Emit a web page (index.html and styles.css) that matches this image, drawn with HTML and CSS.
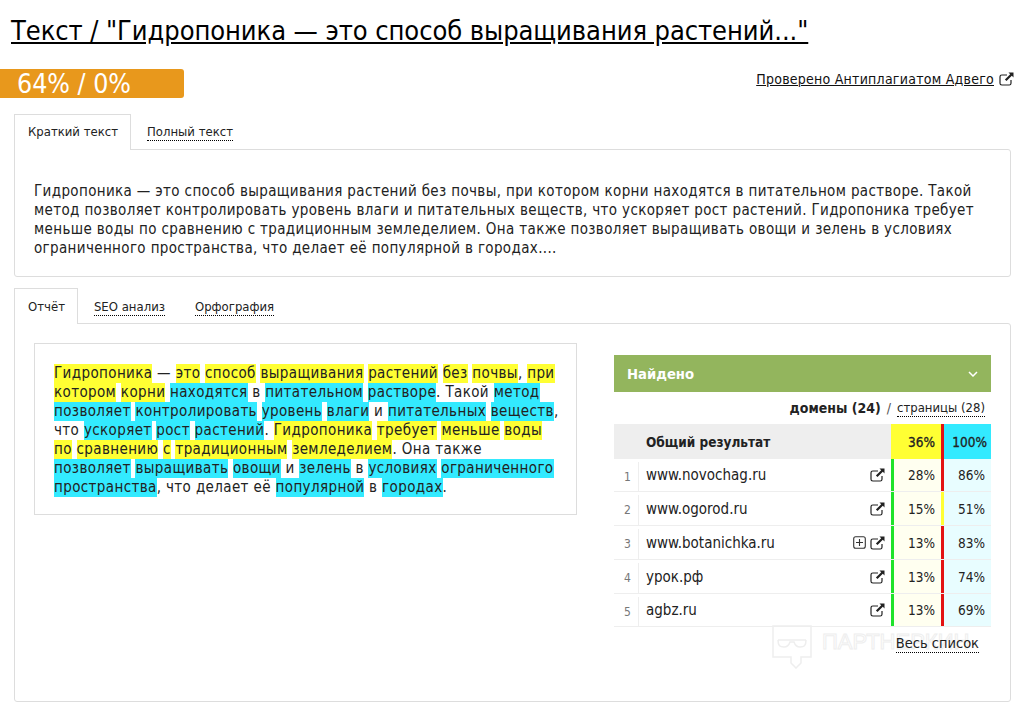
FILE: index.html
```html
<!DOCTYPE html>
<html lang="ru">
<head>
<meta charset="utf-8">
<title>Текст</title>
<link rel="stylesheet" href="styles.css">
</head>
<body>
<svg class="sprite" width="0" height="0">
  <symbol id="ext" viewBox="0 0 15 14">
    <path d="M12 8v3.2A1.8 1.8 0 0 1 10.2 13H2.800A1.800 1.800 0 0 1 1 11.200V4.800A1.800 1.800 0 0 1 2.800 3H8" fill="none" stroke="currentColor" stroke-width="1.200"/>
    <path d="M9.500 .5H14.500V5.500L12.800 3.800 7.500 9.100 5.900 7.500 11.200 2.200Z" fill="currentColor"/>
  </symbol>
</svg>
<h1 class="title"><a href="#">Текст / "Гидропоника — это способ выращивания растений..."</a></h1>
<div class="meta">
  <div class="score">64% / 0%</div>
  <a class="verified" href="#"><span class="verified-text">Проверено Антиплагиатом Адвего</span><svg class="ext ext-top"><use href="#ext"/></svg></a>
</div>
<div class="tabs tabs-first">
  <span class="tab active">Краткий текст</span>
  <span class="tab"><span class="dotted">Полный текст</span></span>
</div>
<section class="panel panel-text">
  <p class="summary">Гидропоника — это способ выращивания растений без почвы, при котором корни находятся в питательном растворе. Такой<br>метод позволяет контролировать уровень влаги и питательных веществ, что ускоряет рост растений. Гидропоника требует<br>меньше воды по сравнению с традиционным земледелием. Она также позволяет выращивать овощи и зелень в условиях<br>ограниченного пространства, что делает её популярной в городах....</p>
</section>
<div class="tabs tabs-second">
  <span class="tab active">Отчёт</span>
  <span class="tab"><span class="dotted">SEO анализ</span></span>
  <span class="tab"><span class="dotted">Орфография</span></span>
</div>
<section class="panel panel-report">
  <div class="marked">
    <p class="marked-text"><i class="y">Гидропоника</i> — <i class="y">это</i> <i class="y">способ</i> <i class="y">выращивания</i> <i class="y">растений</i> <i class="y">без</i> <i class="y">почвы</i>, <i class="y">при</i><br><i class="y">котором</i> <i class="y">корни</i> <i class="c">находятся</i> в <i class="c">питательном</i> <i class="c">растворе</i>. Такой <i class="c">метод</i><br><i class="c">позволяет</i> <i class="c">контролировать</i> <i class="c">уровень</i> <i class="c">влаги</i> и <i class="c">питательных</i> <i class="c">веществ</i>,<br>что <i class="c">ускоряет</i> <i class="c">рост</i> <i class="c">растений</i>. <i class="y">Гидропоника</i> <i class="y">требует</i> <i class="y">меньше</i> <i class="y">воды</i><br><i class="y">по</i> <i class="y">сравнению</i> <i class="y">с</i> <i class="y">традиционным</i> <i class="y">земледелием</i>. Она также<br><i class="c">позволяет</i> <i class="c">выращивать</i> <i class="c">овощи</i> и <i class="c">зелень</i> в <i class="c">условиях</i> <i class="c">ограниченного</i><br><i class="c">пространства</i>, что делает её <i class="c">популярной</i> в <i class="c">городах</i>.</p>
  </div>
  <div class="found">
    <div class="found-head"><span>Найдено</span>
      <svg class="chev" viewBox="0 0 10 6" width="10" height="6"><path d="M1 1l4 4 4-4" fill="none" stroke="currentColor" stroke-width="1.500"/></svg>
    </div>
    <div class="found-switch"><b>домены (24)</b><span class="slash">/</span><span class="dotted">страницы (28)</span></div>
    <div class="grid">
      <div class="row row-head">
        <div class="num"></div>
        <div class="name"><b>Общий результат</b></div>
        <div class="pct p1 head-y">36%</div>
        <div class="pct p2 head-c">100%</div>
      </div>
      <div class="row">
        <div class="num"><span>1</span></div>
        <div class="name"><span class="host">www.novochag.ru</span><svg class="ext"><use href="#ext"/></svg></div>
        <div class="pct p1 g">28%</div>
        <div class="pct p2 r">86%</div>
      </div>
      <div class="row">
        <div class="num"><span>2</span></div>
        <div class="name"><span class="host">www.ogorod.ru</span><svg class="ext"><use href="#ext"/></svg></div>
        <div class="pct p1 g">15%</div>
        <div class="pct p2 yl">51%</div>
      </div>
      <div class="row">
        <div class="num"><span>3</span></div>
        <div class="name"><span class="host">www.botanichka.ru</span>
          <svg class="plus" viewBox="0 0 13 13"><rect x=".7" y=".7" width="11.600" height="11.600" rx="2" fill="none" stroke="currentColor" stroke-width="1.100"/><path d="M6.500 3v7M3 6.500h7" stroke="currentColor" stroke-width="1.100"/></svg>
          <svg class="ext ext-near"><use href="#ext"/></svg></div>
        <div class="pct p1 g">13%</div>
        <div class="pct p2 r">83%</div>
      </div>
      <div class="row">
        <div class="num"><span>4</span></div>
        <div class="name"><span class="host">урок.рф</span><svg class="ext"><use href="#ext"/></svg></div>
        <div class="pct p1 g">13%</div>
        <div class="pct p2 r">74%</div>
      </div>
      <div class="row">
        <div class="num"><span>5</span></div>
        <div class="name"><span class="host">agbz.ru</span><svg class="ext"><use href="#ext"/></svg></div>
        <div class="pct p1 g">13%</div>
        <div class="pct p2 r">69%</div>
      </div>
    </div>
    <div class="all"><span class="dotted">Весь список</span></div>
    <div class="watermark">
      <svg viewBox="0 0 40 44" width="40" height="44"><path d="M1 1H39V32H29V38L24 43 19 38V32H1Z" fill="none" stroke="currentColor" stroke-width="1.500"/><path d="M6 15H34M6 15c0 6 2 7 6 7s5-2 6-5h4c1 3 2 5 6 5s6-1 6-7" fill="none" stroke="currentColor" stroke-width="1.500"/></svg>
      <span>ПАРТНЕРКИН</span>
    </div>
  </div>
</section>
</body>
</html>
```
FILE: styles.css
```css
* { box-sizing: border-box; }
html, body { margin: 0; padding: 0; background: #fff; }
body {
  font-family: "DejaVu Sans", sans-serif;
  font-stretch: condensed;
  font-size: 15px;
  color: #222;
  height: 719px;
  overflow: hidden;
}
.sprite { position: absolute; }
a { color: #000; }
.title {
  margin: 0;
  padding: 14px 11px 0;
  font-size: 27px;
  line-height: 33px;
  font-weight: 400;
  letter-spacing: -.07px;
}
.meta {
  display: flex;
  justify-content: space-between;
  align-items: center;
  margin-top: 22px;
  height: 29px;
  padding-right: 12px;
}
.score {
  width: 184px;
  height: 29px;
  padding-left: 17px;
  background: #e8981c;
  border-radius: 0 3px 3px 0;
  color: #fff;
  font-size: 26.500px;
  line-height: 29px;
}
.verified { display: flex; align-items: center; gap: 5px; font-size: 14px; letter-spacing: .25px; color: #111; text-decoration: none; margin-top: -10px; }
.verified-text { text-decoration: underline; }
.ext { width: 15px; height: 14px; color: #222; flex: none; }
.tabs {
  display: flex;
  margin: 0 15px 0 14px;
  height: 36px;
}
.tabs-first { margin-top: 16px; }
.tabs-second { margin-top: 11px; }
.tab {
  padding: 0 13px;
  margin-right: 2px;
  height: 36px;
  line-height: 33px;
  font-size: 13px;
  border: 1px solid transparent;
  border-bottom: 0;
}
.tabs-second .tab { line-height: 35px; }
.tab.active {
  background: #fff;
  border-color: #ddd;
  padding: 0 12px 0 13px;
  position: relative;
  z-index: 1;
}
.dotted { border-bottom: 1px dotted #000; padding-bottom: 1px; }
.panel {
  margin: -1px 15px 0 14px;
  border: 1px solid #ddd;
  border-radius: 0 3px 3px 3px;
}
.panel-text { height: 128px; padding: 32px 19px 0; }
.summary { margin: 0; line-height: 19px; white-space: nowrap; letter-spacing: .36px; }
.panel-report {
  height: 379px;
  padding: 19px 19px 0;
  display: flex;
  align-items: flex-start;
  justify-content: space-between;
}
.marked {
  width: 543px;
  height: 172px;
  border: 1px solid #ddd;
  padding: 20px 19px 0;
}
.marked-text { margin: 0; line-height: 19px; white-space: nowrap; letter-spacing: .38px; }
.marked-text i { font-style: normal; display: inline-block; height: 19px; }
.y { background: #ff3; }
.c { background: #33eaff; }
.found { width: 377px; margin-top: 12px; position: relative; }
.found-head {
  height: 37px;
  background: #93b55d;
  color: #fff;
  font-weight: 700;
  font-size: 14.700px;
  display: flex;
  align-items: center;
  justify-content: space-between;
  padding: 0 13px;
}
.found-switch {
  height: 32px;
  display: flex;
  justify-content: flex-end;
  align-items: center;
  gap: 6px;
  padding-right: 6px;
  font-size: 14px;
}
.slash { color: #555; }
.found-switch .dotted { font-size: 13px; }
.row {
  display: grid;
  grid-template-columns: 25px 252px 50px 50px;
  height: 34px;
  border-bottom: 1px solid #eee;
  align-items: stretch;
}
.row:nth-child(2), .row:last-child { height: 33px; }
.row-head { height: 35px; background: #eee; border: 0; font-size: 13.500px; }
.num { color: #777; font-size: 12px; display: flex; align-items: center; padding: 3px 0 0 10px; position: relative; }
.row:not(.row-head) .num::after { content: ""; position: absolute; right: 0; top: 3px; bottom: 0; width: 1px; background: #eee; }
.name { display: flex; align-items: center; padding: 0 6px 0 7px; }
.host { flex: 1; }
.pct { display: flex; align-items: center; justify-content: flex-end; padding-right: 6px; font-size: 13.500px; }
.p1 { background: #fffff0; border-left: 3px solid transparent; }
.p2 { background: #e8fdff; border-left: 3px solid transparent; }
.head-y { background: #ff3; border: 0; -webkit-text-stroke: .3px #222; }
.head-c { background: #33eaff; border-left: 3px solid #e31212; padding-right: 4px; -webkit-text-stroke: .3px #222; }
.g { border-left-color: #1fe32a; }
.r { border-left-color: #e31212; }
.yl { border-left-color: #ff3; }
.plus { width: 13px; height: 13px; color: #333; margin-right: 4px; flex: none; }
.all { text-align: right; padding: 8px 12px 0 0; font-size: 14.500px; position: relative; z-index: 1; }
.watermark {
  position: absolute;
  left: 158px;
  top: 270px;
  display: flex;
  gap: 10px;
  color: #eee;
  align-items: flex-start;
}
.watermark span { font-family: "Liberation Sans", sans-serif; font-size: 22px; line-height: 34px; color: transparent; -webkit-text-stroke: 1px #eee; }
```
